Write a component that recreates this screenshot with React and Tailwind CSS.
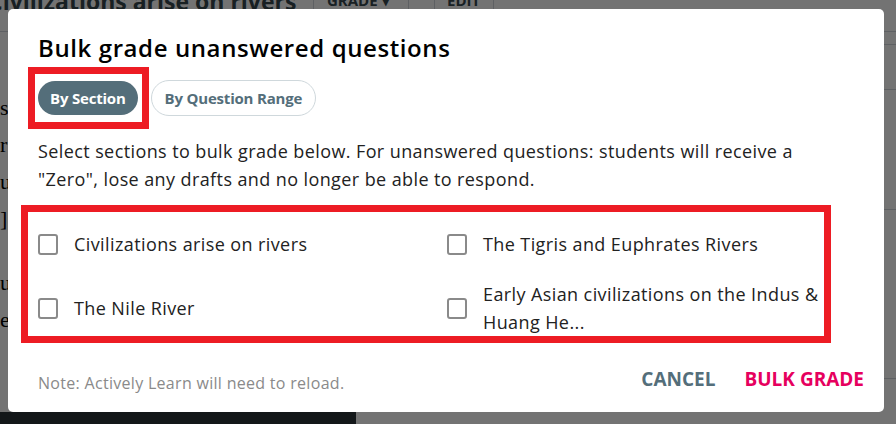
import React, { useState } from 'react';

const sections = [
  { id: 1, title: 'Civilizations arise on rivers' },
  { id: 2, title: 'The Tigris and Euphrates Rivers' },
  { id: 3, title: 'The Nile River' },
  { id: 4, title: 'Early Asian civilizations on the Indus & Huang He...' },
];

const App = () => {
  const [mode, setMode] = useState('section');
  const [checked, setChecked] = useState({});

  const toggle = (id) => setChecked({ ...checked, [id]: !checked[id] });

  return (
    <div className="relative w-[896px] h-[424px] overflow-hidden bg-white font-['Open_Sans',sans-serif]">
      {/* Page behind the dialog */}
      <div className="flex flex-col h-full">
        <div className="flex items-start h-[32px] border-b border-gray-300">
          <div className="w-[325px] -mt-[12px] -ml-[12px] text-[23px] font-bold text-[#37474f] leading-[26px] whitespace-nowrap">
            Civilizations arise on rivers
          </div>
          <div className="w-[95px] h-full border-l border-gray-300 pl-[13px] text-[#37474f] font-bold text-[15px] leading-[18px] -mt-[9px]">
            GRADE ▾
          </div>
          <div className="w-[26px] h-full border-l border-gray-300" />
          <div className="w-[59px] h-full border-l border-gray-300 pl-[12px] text-[#37474f] font-bold text-[15px] leading-[18px] -mt-[9px]">
            EDIT
          </div>
          <div className="h-full border-l border-gray-300" />
        </div>
        <div className="flex flex-1">
          <div className="w-[356px] flex flex-col pt-[57px] font-['Liberation_Serif',serif] text-[22px] text-black leading-[37px]">
            <span>s</span>
            <span>r</span>
            <span>u</span>
            <span>]</span>
            <span className="mt-[27px]">u</span>
            <span>e</span>
          </div>
          <div className="flex-1 flex flex-col">
            <div className="h-[13px] border-b border-gray-300" />
            <div className="h-[45px] border-b border-gray-300" />
            <div className="h-[120px] border-b border-gray-300" />
            <div className="flex-1" />
            <div className="h-[34px] border-t border-gray-300" />
          </div>
        </div>
        <div className="h-[12px] w-[356px] bg-[#2c3338]" />
      </div>

      {/* Backdrop */}
      <div className="absolute inset-0 bg-black/55" />

      {/* Dialog */}
      <div className="absolute left-[8px] top-[9px] w-[876px] h-[403px] bg-white rounded-[5px] pl-[30px] pr-[20px] pt-[23px] flex flex-col">
        <h2 className="text-[24px] font-semibold text-black tracking-[0.6px] leading-[32px]">
          Bulk grade unanswered questions
        </h2>

        <div className="flex items-center gap-[2px] mt-[3px] -ml-[10px] shrink-0">
          <div className="border-[7px] border-[#ed1c24] pl-[3px] pr-[4px] py-[7px]">
            <button
              onClick={() => setMode('section')}
              className={`h-[34px] px-[12px] rounded-full text-[15px] font-bold tracking-[-0.2px] ${mode === 'section' ? 'bg-[#546e7a] text-white' : 'border border-[#cfd8dc] text-[#546e7a]'}`}
            >
              By Section
            </button>
          </div>
          <button
            onClick={() => setMode('range')}
            className={`h-[36px] px-[13px] rounded-full text-[15px] font-bold tracking-[-0.2px] ${mode === 'range' ? 'bg-[#546e7a] text-white' : 'border border-[#cfd8dc] text-[#546e7a]'}`}
          >
            By Question Range
          </button>
        </div>

        <p className="mt-[8px] text-[18px] leading-[28px] text-[#222] tracking-[0.4px]">
          Select sections to bulk grade below. For unanswered questions: students will receive a
          <br />
          "Zero", lose any drafts and no longer be able to respond.
        </p>

        <div className="mt-[12px] -ml-[17px] w-[810px] h-[138px] shrink-0 border-[7px] border-[#ed1c24] grid grid-cols-[409px_1fr] content-start gap-y-[22px] pt-[18px] pl-[10px]">
          {sections.map((s) => (
            <label key={s.id} className="flex items-center gap-[16px] cursor-pointer">
              <span
                onClick={() => toggle(s.id)}
                className={`shrink-0 w-[20px] h-[21px] rounded-[3px] border-2 ${checked[s.id] ? 'bg-[#546e7a] border-[#546e7a]' : 'border-[#8a8a8a]'}`}
              />
              <span className="text-[18px] leading-[28px] text-[#222] tracking-[0.4px] max-w-[345px]">{s.title}</span>
            </label>
          ))}
        </div>

        <div className="flex items-end justify-between mt-[21px]">
          <span className="text-[16px] text-[#8a8a8a] leading-[22px] tracking-[0.3px]">Note: Actively Learn will need to reload.</span>
          <div className="flex items-center gap-[29px] leading-[30px]">
            <button className="text-[19px] font-bold text-[#546e7a]">CANCEL</button>
            <button className="text-[19px] font-bold text-[#e6005e]">BULK GRADE</button>
          </div>
        </div>
      </div>
    </div>
  );
};

export default App;
